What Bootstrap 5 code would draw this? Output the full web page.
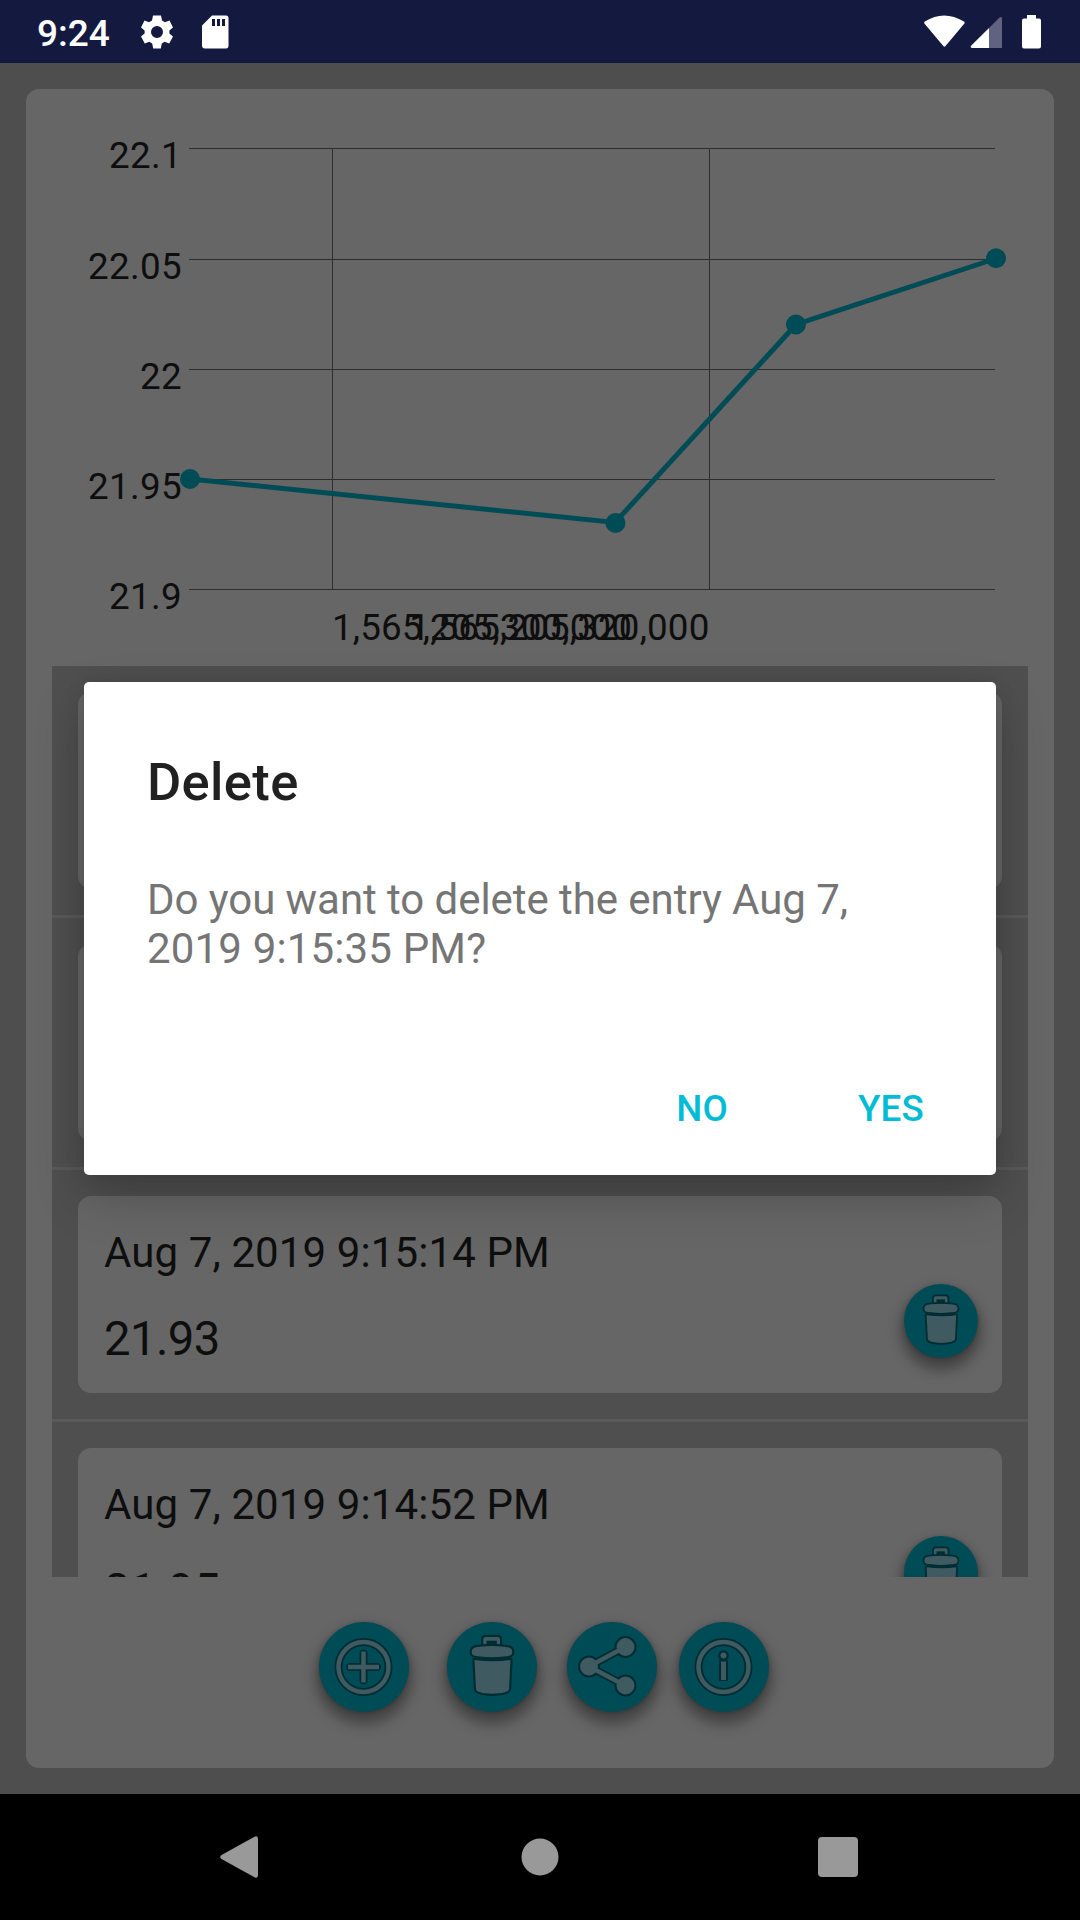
<!DOCTYPE html>
<html lang="en">
<head>
<meta charset="utf-8">
<title>Delete entry</title>
<link href="https://cdn.jsdelivr.net/npm/bootstrap@5.3.0/dist/css/bootstrap.min.css" rel="stylesheet">
<style>
body{width:1080px;height:1920px;overflow:hidden;font-family:Roboto,"Liberation Sans",sans-serif;background:#4e4e4e;color:#0e0e0e;line-height:1.172}
svg{display:block;flex:none}
.statusbar{height:63px;background:#141940;color:#fff;padding:0 38px 0 37px}
.clock{font-size:37px;font-weight:500;line-height:44px;margin-top:4px;width:104px}
.sd-icon{margin-left:29px}
.screen{height:1731px;padding:26px}
.panel{height:1679px;background:#666;border-radius:13px}
.chart text{font-family:Roboto,"Liberation Sans",sans-serif;font-size:36.75px;letter-spacing:.36px;fill:#0e0e0e}
.chart .tick-x{letter-spacing:.16px}
.entries{margin:0 26px;height:911px;background:#4f4f4f;overflow:hidden}
.entry{padding:26px;height:249px}
.entry+.entry{border-top:3px solid #595959;height:252px}
.entry-box{height:197px;background:#666;border-radius:13px;padding:32px 24px 0 26px}
.entry-date{font-size:42px;line-height:50px;letter-spacing:.11px}
.entry-value{font-size:47.25px;line-height:56px;letter-spacing:-.6px;margin-top:33px}
.fab{background:#004c56;border-radius:50%;width:90px;height:90px;box-shadow:0 9px 14px 3px rgba(0,0,0,.36),0 1px 4px rgba(0,0,0,.2);flex:none}
.fab-sm{width:74px;height:74px;margin-top:56px}
.tools{padding:45px 0 0 293px}
.fab-clear{margin-left:38px}
.fab-share{margin-left:30px}
.fab-info{margin-left:22px}
.navbar-keys{height:126px;background:#000;padding:0 222px 0 220px}
.home-key{margin-left:3px}
.dialog-box{position:absolute;left:84px;top:682px;width:912px;height:493px;background:#fff;border-radius:5px;padding:73px 72px 0 63px;box-shadow:0 22px 50px rgba(0,0,0,.22),0 0 20px rgba(0,0,0,.08)}
.dialog-title{font-size:52.5px;font-weight:500;line-height:54px;letter-spacing:.35px;color:#212121;margin:0}
.dialog-text{font-size:42px;line-height:49px;letter-spacing:-.06px;color:#757575;margin:66px -10px 0 0}
.dialog-text span{letter-spacing:.16px}
.dialog-actions{margin-top:108px}
.dialog-btn{font-size:36.75px;font-weight:500;line-height:56px;letter-spacing:.2px;color:#00bcd4;padding:0;border:0;border-radius:0}
.dialog-btn+.dialog-btn{margin-left:130px}
</style>
</head>
<body>
<svg width="0" height="0" class="position-absolute">
 <defs>
  <symbol id="trash" viewBox="0 0 90 90">
   <g fill="#3f5a60" stroke="#012c32" stroke-width="4.400" stroke-linejoin="round" paint-order="stroke">
    <path d="M36.300 27V17.500q0-2.500 2.500-2.500h11.700q2.500 0 2.500 2.500V27z"/>
    <path d="M27.500 38q18 2.500 36 0l-1.500 29q-.5 4.300-17 4.800-15.500-.5-16-4.800z"/>
    <path d="M24.800 30c0-3.700 2-4.700 8.200-5.300q12-1.500 24 0c6.200.6 8.200 1.600 8.200 5.300 0 3.200-2 3.900-8.200 4.500q-12 1.300-24 0c-6.200-.6-8.200-1.300-8.200-4.500z"/>
   </g>
   <path fill="#012c32" d="M39.500 18.700h10.300v5h-10.300z"/>
  </symbol>
 </defs>
</svg>

<header class="statusbar d-flex align-items-center">
 <div class="clock">9:24</div>
 <svg width="32" height="34" viewBox="0 0 32 34" fill="#fff"><path fill-rule="evenodd" d="M12 .5h8l1 5 3 1.800 4.500-1.800 3.500 7-3.600 3v3l3.600 3-3.800 7-4.500-1.800-2.900 1.800-1 5h-7.600l-1-5-2.900-1.800-4.500 1.800-3.800-7 3.600-3v-3L0 12.500l3.500-7L8 7.300l3-1.800zM16 11a6 6 0 1 0 0 12 6 6 0 0 0 0-12z"/></svg>
 <svg class="sd-icon" width="27" height="34" viewBox="0 0 27 34" fill="#fff"><path fill-rule="evenodd" d="M10 .5h14q2.500 0 2.500 3v27q0 3-2.500 3H3q-3 0-3-3V10.500zM10 4v7h3V4zM15 4v7h3V4zM20 4v7h3V4z"/></svg>
 <svg width="118" height="34" viewBox="0 0 118 34" class="ms-auto"><path fill="#fff" d="M.8 6.500Q20-5.500 40 6.500q1.300 1 .2 2.200L21.500 31q-1 1.300-2.200 0L.6 8.700q-.9-1.200.2-2.200z"/><path fill="#5f6280" d="M65 13 75.500 2.500q2.500-1.500 2.500 1V33H65z"/><path fill="#fff" d="M65 13v20H48q-2-.5-1.200-2z"/><path fill="#fff" d="M103 0h9v3.500h3q2 0 2 2v26q0 2-2 2H100q-2 0-2-2v-26q0-2 2-2h3z"/></svg>
</header>

<main class="screen">
 <div class="panel">
  <svg class="chart" width="1028" height="577" viewBox="26 89 1028 577">
   <g stroke="#2e2e2e" stroke-width="1" shape-rendering="crispEdges">
    <path d="M189 148.500H995M189 259.500H995M189 369.500H995M189 479.500H995M189 589.500H995M332.500 148V589M709.500 148V589"/>
   </g>
   <g text-anchor="end">
    <text x="182" y="168">22.1</text><text x="182" y="279">22.05</text><text x="182" y="389">22</text><text x="182" y="499">21.95</text><text x="182" y="609">21.9</text>
   </g>
   <text class="tick-x" x="332" y="640">1,565,205,300,000</text>
   <text class="tick-x" x="709.500" y="640" text-anchor="end">1,565,205,320,000</text>
   <polyline points="190,479 615,522.500 796,324.500 996,258.500" fill="none" stroke="#004c56" stroke-width="5"/>
   <g fill="#004c56"><circle cx="190" cy="479" r="10"/><circle cx="615.500" cy="523" r="10"/><circle cx="796" cy="324.500" r="10"/><circle cx="996" cy="258.300" r="10"/></g>
  </svg>

  <div class="entries">
   <div class="entry"><div class="entry-box"></div></div>
   <div class="entry"><div class="entry-box"></div></div>
   <div class="entry">
    <div class="entry-box d-flex justify-content-between">
     <div><div class="entry-date">Aug 7, 2019 9:15:14 PM</div><div class="entry-value">21.93</div></div>
     <div class="fab fab-sm"><svg width="74" height="74"><use href="#trash"/></svg></div>
    </div>
   </div>
   <div class="entry">
    <div class="entry-box d-flex justify-content-between">
     <div><div class="entry-date">Aug 7, 2019 9:14:52 PM</div><div class="entry-value">21.95</div></div>
     <div class="fab fab-sm"><svg width="74" height="74"><use href="#trash"/></svg></div>
    </div>
   </div>
  </div>

  <div class="tools d-flex">
   <div class="fab"><svg width="90" height="90" fill="none"><g stroke="#012c32" stroke-width="8"><circle cx="44.500" cy="45" r="25"/><path stroke-linecap="round" d="M44.500 31.500v27M31 45h27"/></g><g stroke="#3f5a60" stroke-width="4.500"><circle cx="44.500" cy="45" r="25"/><path d="M44.500 29.500v31M29 45h31"/></g></svg></div>
   <div class="fab fab-clear"><svg width="90" height="90"><use href="#trash"/></svg></div>
   <div class="fab fab-share"><svg width="90" height="90"><g stroke="#012c32" stroke-width="8" fill="#012c32"><path d="M58 25 22 44.500 58 63.500" fill="none"/></g><g fill="#3f5a60" stroke="#012c32" stroke-width="2"><circle cx="58.500" cy="25" r="10"/><circle cx="22" cy="44.500" r="10"/><circle cx="58.500" cy="63.500" r="10"/></g><path d="M58 25 22 44.500 58 63.500" fill="none" stroke="#3f5a60" stroke-width="4.500"/></svg></div>
   <div class="fab fab-info"><svg width="90" height="90" fill="none"><g stroke="#012c32"><circle cx="44.500" cy="45" r="25" stroke-width="8"/><circle cx="44.500" cy="33.500" r="3.800" stroke-width="3"/><path d="M44.500 37.500v21.500" stroke-width="9"/></g><circle cx="44.500" cy="45" r="25" stroke="#3f5a60" stroke-width="4.500"/><circle cx="44.500" cy="33.500" r="3" fill="#3f5a60"/><path d="M44.500 39.500v18.500" stroke="#3f5a60" stroke-width="5"/></svg></div>
  </div>
 </div>
</main>

<footer class="navbar-keys d-flex align-items-center justify-content-between">
 <svg width="38" height="42" viewBox="0 0 38 42" fill="#999"><path d="M34.500.7Q38-1 38 3v36q0 4-3.500 2.300L1.500 23q-2.500-2 0-4z"/></svg>
 <svg class="home-key" width="38" height="38" fill="#999"><circle cx="19" cy="19" r="18.500"/></svg>
 <svg width="40" height="40" fill="#999"><rect width="40" height="40" rx="4"/></svg>
</footer>

<section class="dialog-box" role="dialog">
 <h1 class="dialog-title">Delete</h1>
 <p class="dialog-text">Do you want to delete the entry Aug 7,<br><span>2019 9:15:35 PM?</span></p>
 <div class="dialog-actions d-flex justify-content-end"><button class="btn dialog-btn">NO</button><button class="btn dialog-btn">YES</button></div>
</section>
<script src="https://cdn.jsdelivr.net/npm/bootstrap@5.3.0/dist/js/bootstrap.bundle.min.js"></script>
</body>
</html>
